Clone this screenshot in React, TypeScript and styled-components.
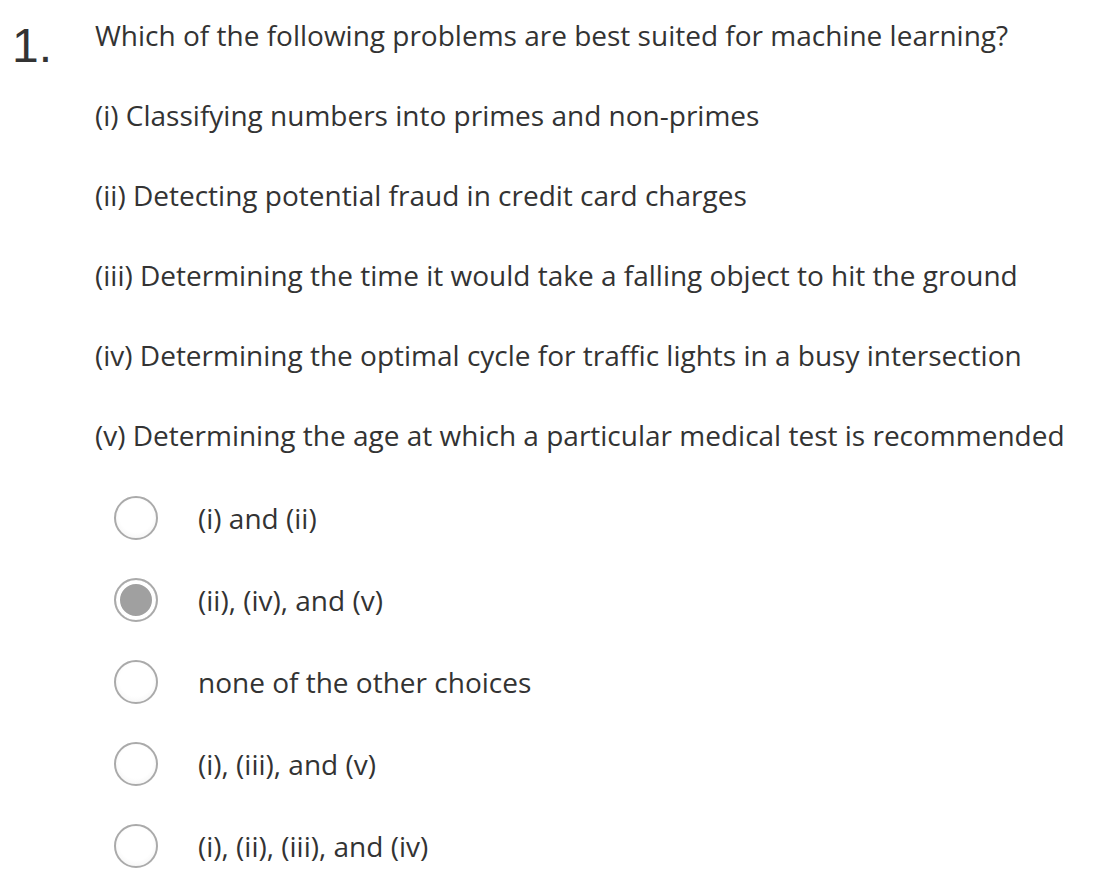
import { createGlobalStyle, styled } from 'styled-components';

const GlobalStyle = createGlobalStyle`
  body {
    margin: 0;
    background: #ffffff;
    font-family: 'Open Sans', 'Liberation Sans', sans-serif;
    color: #333333;
  }
`;

const statements = [
  '(i) Classifying numbers into primes and non-primes',
  '(ii) Detecting potential fraud in credit card charges',
  '(iii) Determining the time it would take a falling object to hit the ground',
  '(iv) Determining the optimal cycle for traffic lights in a busy intersection',
  '(v) Determining the age at which a particular medical test is recommended',
];

const choices = [
  '(i) and (ii)',
  '(ii), (iv), and (v)',
  'none of the other choices',
  '(i), (iii), and (v)',
  '(i), (ii), (iii), and (iv)',
];

const selected = 1;

const App = () => {
  return (
    <>
      <GlobalStyle />
      <Question>
        <Number>1.</Number>
        <Body>
          <Prompt>Which of the following problems are best suited for machine learning?</Prompt>
          {statements.map((s) => (
            <Statement key={s}>{s}</Statement>
          ))}
          <Choices>
            {choices.map((c, i) => (
              <Choice key={c}>
                <Radio $checked={i === selected} />
                <ChoiceText>{c}</ChoiceText>
              </Choice>
            ))}
          </Choices>
        </Body>
      </Question>
    </>
  );
};

export default App;

const Question = styled.div`
  display: flex;
  padding: 15px 0 0 12px;
`;

const Number = styled.div`
  width: 83px;
  font-family: 'Liberation Sans', Arial, sans-serif;
  font-size: 48px;
  line-height: 61px;
  color: #333;
`;

const Body = styled.div`
  display: flex;
  flex-direction: column;
`;

const Prompt = styled.div`
  font-size: 28px;
  line-height: 40px;
`;

const Statement = styled.div`
  font-size: 28px;
  line-height: 40px;
  margin-top: 40px;
`;

const Choices = styled.div`
  display: flex;
  flex-direction: column;
  gap: 38px;
  margin-top: 41px;
  padding-left: 19px;
`;

const Choice = styled.label`
  display: flex;
  align-items: center;
  gap: 40px;
  height: 44px;
`;

const Radio = styled.span<{ $checked: boolean }>`
  box-sizing: border-box;
  width: 44px;
  height: 44px;
  border-radius: 50%;
  border: 2px solid #aaaaaa;
  background: radial-gradient(circle at 50% 45%, #ffffff 55%, #eeeeee 100%);
  box-shadow: ${(p) => (p.$checked ? 'inset 0 0 0 4px #ffffff, inset 0 0 0 40px #a0a0a0' : 'none')};
`;

const ChoiceText = styled.span`
  font-size: 28px;
`;
